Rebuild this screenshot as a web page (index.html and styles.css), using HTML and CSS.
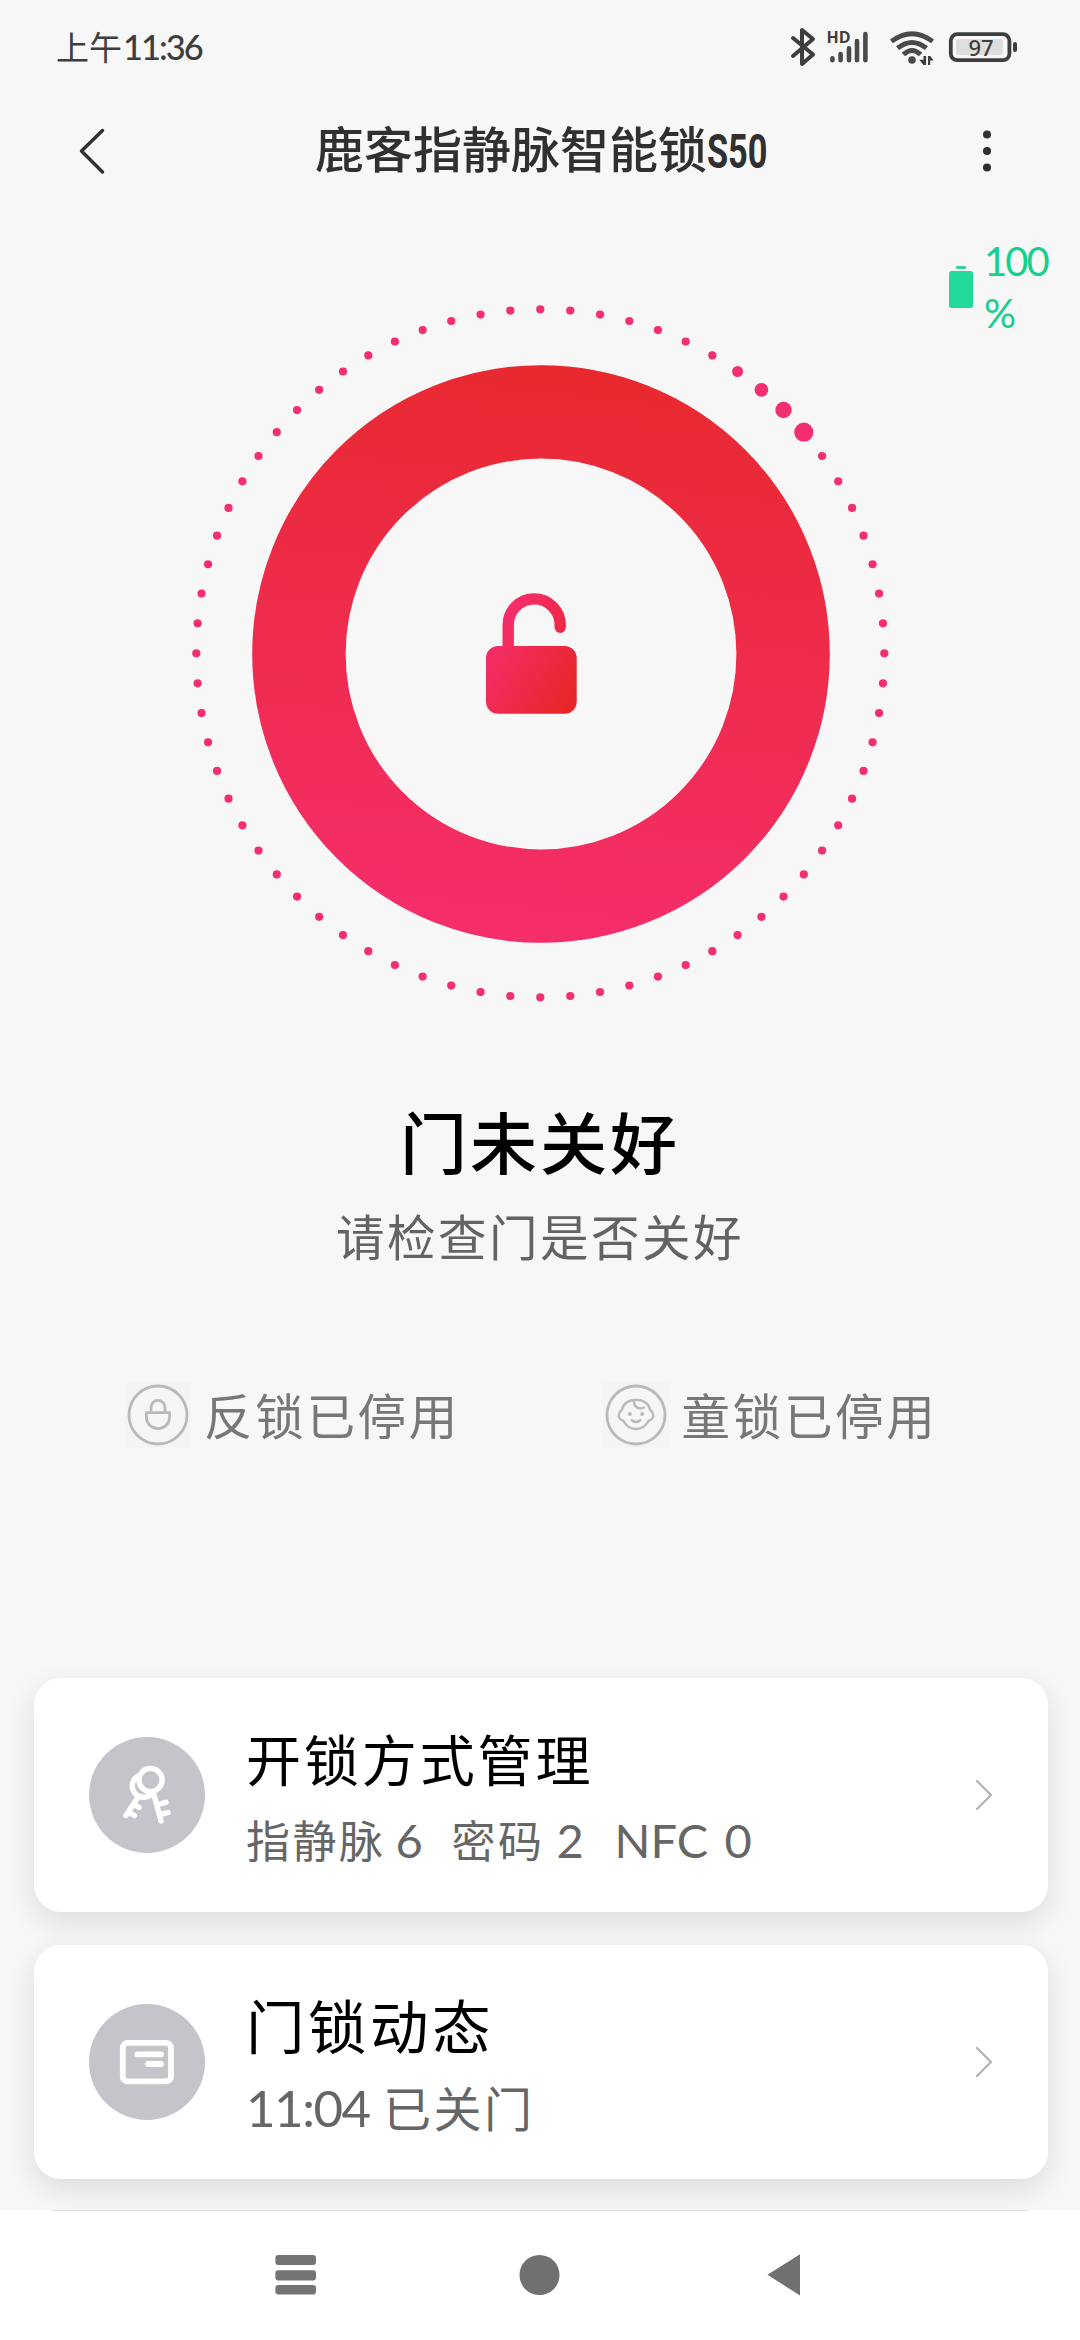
FILE: index.html
```html
<!DOCTYPE html>
<html lang="zh-CN">
<head>
<meta charset="utf-8">
<title>鹿客指静脉智能锁S50</title>
<link rel="stylesheet" href="styles.css">
</head>
<body>
<header class="status">
  <div class="clock">上午<span class="lat clock-digits">11:36</span></div>
  <svg class="status-icons" viewBox="785 20 240 56" fill="none" stroke="#3e3e3e" stroke-linecap="round" stroke-linejoin="round">
    <path stroke-width="4" d="M793 38 L813 54.5 L802 64 V30 L813 39 L793 56"/>
    <text class="hd" x="826.5" y="43">HD</text>
    <g stroke="#4a4a4a" stroke-width="4.6"><path d="M832.4 58.4V60.2M840.6 54V60.2M849 48.4V60.2M857 41V60.2M865.4 34V60.2"/></g>
    <g stroke="#4a4a4a" stroke-width="4.8" stroke-linecap="butt"><path d="M891.4 41.4Q912 26 932.6 41.4M897.6 48.2Q912 36.6 926.4 48.2M903.4 54.6Q912 46.4 920.6 54.6"/></g>
    <circle cx="912" cy="60" r="3.8" fill="#4a4a4a" stroke="none"/>
    <path stroke="none" fill="#3e3e3e" d="M923.5 56h2.6v9h-2.6l-4.3-5.2h4.3zM928 56h2.2l3.4 4.6h-3.4V65H928z"/>
    <rect x="950.8" y="34.2" width="58.6" height="26" rx="6.5" stroke-width="3.8"/>
    <rect x="956" y="39" width="47" height="16" rx="2" fill="#dedede" stroke="none"/>
    <rect x="1013" y="42" width="4" height="10" rx="2" fill="#3e3e3e" stroke="none"/>
    <text class="level" x="968.5" y="55.5">97</text>
  </svg>
</header>

<nav class="titlebar">
  <svg class="back" viewBox="0 0 30 50" fill="none" stroke="#303030" stroke-width="3.4" stroke-linecap="round" stroke-linejoin="round"><path d="M25.5 4.5 4.5 25 25.5 46"/></svg>
  <h1>鹿客指静脉智能锁<span class="model">S50</span></h1>
  <svg class="more" viewBox="0 0 12 50" fill="#303030"><circle cx="6" cy="8.5" r="4"/><circle cx="6" cy="25" r="4"/><circle cx="6" cy="41.5" r="4"/></svg>
</nav>

<main>
  <section class="hero">
    <div class="charge">
      <svg class="cell" viewBox="0 0 24 42"><rect x="7" y="0" width="10" height="3" rx="1.2" fill="#38cf98"/><rect y="5" width="24" height="37" rx="2.5" fill="#22db9a"/></svg>
      <div class="percent">100<br>%</div>
    </div>
    <svg class="dial" viewBox="190 303 700 700">
      <defs>
        <linearGradient id="ring" gradientUnits="userSpaceOnUse" x1="570" y1="365" x2="510" y2="943"><stop offset="0" stop-color="#e8292f"/><stop offset="1" stop-color="#f52e6b"/></linearGradient>
        <linearGradient id="lock" gradientUnits="userSpaceOnUse" x1="490" y1="640" x2="576" y2="690"><stop offset="0" stop-color="#f52e6b"/><stop offset="1" stop-color="#e8262a"/></linearGradient>
      </defs>
      <g id="dots" fill="#f42f70"></g>
      <circle cx="541" cy="654" r="242.1" fill="none" stroke="url(#ring)" stroke-width="93.4"/>
      <path d="M508.2 652V625a26 26 0 0 1 52-.2V627.2" fill="none" stroke="url(#lock)" stroke-width="11.4" stroke-linecap="round"/>
      <rect x="486" y="646" width="90.7" height="67.8" rx="12" fill="url(#lock)"/>
    </svg>
  </section>

  <section class="state">
    <h2>门未关好</h2>
    <p>请检查门是否关好</p>
  </section>

  <section class="flags">
    <div class="flag">
      <svg viewBox="-33 -33 66 66" fill="none" stroke="#b9b9b9" stroke-width="2.8" stroke-linejoin="round"><rect class="haze" x="-33" y="-33" width="66" height="66"/><circle r="29" fill="#f6f6f6"/><path d="M-11.6-2.3H11.6V2A11.6 11.6 0 0 1-11.6 2ZM-7-2.3V-7.6A7 7 0 0 1 7-7.6V-2.3"/></svg>
      <span>反锁已停用</span>
    </div>
    <div class="flag">
      <svg viewBox="-33 -33 66 66" fill="none" stroke="#b9b9b9" stroke-width="2.4" stroke-linecap="round" stroke-linejoin="round"><rect class="haze" x="-33" y="-33" width="66" height="66"/><circle r="29" stroke-width="2.8" fill="#f6f6f6"/><path d="M0-15.3C7-15.3 12.5-11.5 14-5.5 16-3.5 17.5-.5 17.2 2 16 4.5 14 5.5 12.5 6 9.5 11.5 5 14 0 14S-9.5 11.5-12.5 6C-14 5.500-16 4.500-17.200 2-17.500-.5-16-3.500-14-5.500-12.500-11.500-7-15.300 0-15.300ZM-2-14.500C-2.500-8 3-5 8-7.500M-4.300 5.200C-2 7.600 2 7.600 4.300 5.200"/><circle cx="-6.2" cy="-1" r="2" fill="#b9b9b9" stroke="none"/><circle cx="6.2" cy="-1" r="2" fill="#b9b9b9" stroke="none"/></svg>
      <span>童锁已停用</span>
    </div>
  </section>

  <section class="cards">
    <article class="card">
      <svg class="badge" viewBox="89 1737 116 116"><circle cx="147" cy="1795" r="58" fill="#c5c4ca"/><g fill="none" stroke="#fff" stroke-width="5.400" stroke-linecap="round"><circle cx="143.500" cy="1786" r="11.300"/><path d="M138.800 1796 126 1815.500M133.500 1804 139 1807.500M128.500 1812 134.500 1815.500"/><circle cx="150.500" cy="1780" r="11.600" fill="#c5c4ca"/><path d="M153.500 1793 161 1821M158 1804.500 166 1802.300M160 1814.500 168 1812.600"/></g></svg>
      <div class="info">
        <h3>开锁方式管理</h3>
        <p class="detail">指静脉<span class="lat n6">6</span>密码<span class="lat n2">2</span><span class="lat nfc">NFC</span><span class="lat n0">0</span></p>
      </div>
      <svg class="go" viewBox="0 0 18 32"><path d="M2 2 16 16 2 30"/></svg>
    </article>
    <article class="card">
      <svg class="badge" viewBox="89 2004 116 116"><circle cx="147" cy="2062" r="58" fill="#c5c4ca"/><g fill="none" stroke="#fff" stroke-width="5.800" stroke-linecap="round"><rect x="122.800" y="2042.900" width="48.200" height="38.500" rx="5"/><path d="M137.300 2054.300H161M148 2064H161"/></g></svg>
      <div class="info wide">
        <h3>门锁动态</h3>
        <p class="detail"><span class="lat hour">11:04</span>已关门</p>
      </div>
      <svg class="go" viewBox="0 0 18 32"><path d="M2 2 16 16 2 30"/></svg>
    </article>
  </section>
</main>

<footer class="navbar">
  <div class="edge"></div>
  <div class="keys">
    <svg viewBox="275 2254 41 42" fill="#747474"><rect x="275.400" y="2255" width="40.600" height="10" rx="3"/><rect x="275.400" y="2270.200" width="40.600" height="10.200" rx="3"/><rect x="275.400" y="2285" width="40.600" height="9.600" rx="3"/></svg>
    <svg viewBox="519.500 2254 41 42" fill="#707070"><circle cx="540" cy="2275" r="20"/></svg>
    <svg viewBox="763 2254 41 42" fill="#707070"><path d="M767.500 2274.800 800 2254.200V2295.500Z"/></svg>
  </div>
</footer>
<script src="dots.js"></script>
</body>
</html>
```
FILE: styles.css
```css
* { box-sizing: border-box; margin: 0; padding: 0; }
body {
  width: 1080px; height: 2340px; overflow: hidden;
  display: flex; flex-direction: column;
  background: #f7f7f7;
  font-family: "Noto Sans CJK SC", sans-serif;
}
svg { display: block; flex: none; overflow: visible; }
h1, h2, h3, p { white-space: nowrap; }
.lat { font-family: Lato, sans-serif; line-height: 0; display: inline-block; }

.status { height: 96px; display: flex; justify-content: space-between; padding: 20px 55px 0 56px; }
.clock { font-size: 33px; line-height: 52px; color: #3e3e3e; }
.clock-digits { font-size: 34.500px; font-weight: 500; letter-spacing: -2px; margin-left: 1px; }
.status-icons { width: 240px; height: 56px; }
.hd { font: 700 16px "Open Sans", sans-serif; fill: #3e3e3e; stroke: none; }
.level { font: 500 22px "Noto Sans", sans-serif; fill: #3e3e3e; stroke: none; }

.titlebar { height: 110px; display: flex; align-items: center; padding: 0 87px 0 77px; }
.back { width: 30px; height: 50px; }
.more { width: 12px; height: 50px; }
h1 { flex: 1; padding-left: 208px; margin-top: -9px; font-size: 49px; line-height: 60px; font-weight: 500; color: #303030; }
.model { display: inline-block; font: 700 49px/0 Roboto, sans-serif; transform: scaleX(.7); transform-origin: 0 50%; width: 60px; }

.hero { position: relative; height: 894px; display: flex; justify-content: center; padding-top: 97px; }
.dial { width: 700px; height: 700px; }
.charge { position: absolute; right: 32px; top: 29px; width: 99px; display: flex; justify-content: space-between; align-items: center; }
.cell { width: 24px; height: 42px; }
.percent { width: 64px; font: 400 40px/52px Lato, sans-serif; letter-spacing: -2px; color: #17cf8e; }

.state { text-align: center; height: 240px; }
h2 { font-size: 67px; line-height: 80px; font-weight: 500; letter-spacing: 3px; color: #000; }
.state p { font-size: 48.500px; line-height: 60px; margin-top: 25px; letter-spacing: 2.500px; color: #636363; }

.flags { display: flex; height: 338px; padding: 42px 0 0 125px; align-items: flex-start; }
.flag { display: flex; align-items: center; width: 485px; gap: 13px; font-size: 48.500px; line-height: 66px; letter-spacing: 2.700px; color: #777; }
.flag svg { width: 66px; height: 66px; }
.flag span { margin-top: -3px; }
.haze { fill: #f4f4f4; stroke: none; }

.cards { display: flex; flex-direction: column; gap: 33px; padding: 0 32px 0 34px; }
.card { height: 234px; border-radius: 27px; background: #fff; box-shadow: 0 10px 30px rgba(0,0,0,.11); display: flex; align-items: center; padding: 0 55px; }
.badge { width: 116px; height: 116px; }
.info { flex: 1; padding-left: 41px; }
h3 { font-size: 55px; line-height: 70px; font-weight: 400; letter-spacing: 2.900px; color: #000; }
.detail { font-size: 44px; line-height: 60px; margin-top: 17px; letter-spacing: 2.500px; color: #666; }
.detail .lat { font-size: 47px; letter-spacing: 0; }
.n6 { width: 56px; margin-left: 10px; }
.n2 { width: 58px; margin-left: 12px; }
.nfc { width: 110px; }
.wide h3 { font-size: 58.500px; letter-spacing: 3.500px; }
.wide .detail { font-size: 48px; }
.wide .detail .lat { font-size: 51px; width: 137px; letter-spacing: -1.500px; }
.go { width: 18px; height: 32px; fill: none; stroke: #b2b2b2; stroke-width: 2.200; stroke-linecap: round; stroke-linejoin: round; }

.navbar { position: absolute; left: 0; right: 0; top: 2210px; height: 130px; background: #fff; }
.edge { height: 1px; margin: 0 52px; background: #e1e1e1; }
.keys { display: flex; justify-content: space-between; padding: 43px 276px 0 275px; }
.keys svg { width: 41px; height: 42px; }
```
FILE: dots.js
```js
// 72 dots around the dial, five degrees apart; the last of the trail are larger.
const trail = { 7: 5.5, 8: 6.9, 9: 8.2, 10: 9.6 };
const group = document.getElementById('dots');
for (let i = 0; i < 72; i++) {
  const a = i * Math.PI / 36;
  const c = document.createElementNS('http://www.w3.org/2000/svg', 'circle');
  c.setAttribute('cx', (540.3 + 344 * Math.sin(a)).toFixed(2));
  c.setAttribute('cy', (653.3 - 344 * Math.cos(a)).toFixed(2));
  c.setAttribute('r', trail[i] || 4.1);
  group.appendChild(c);
}
```
